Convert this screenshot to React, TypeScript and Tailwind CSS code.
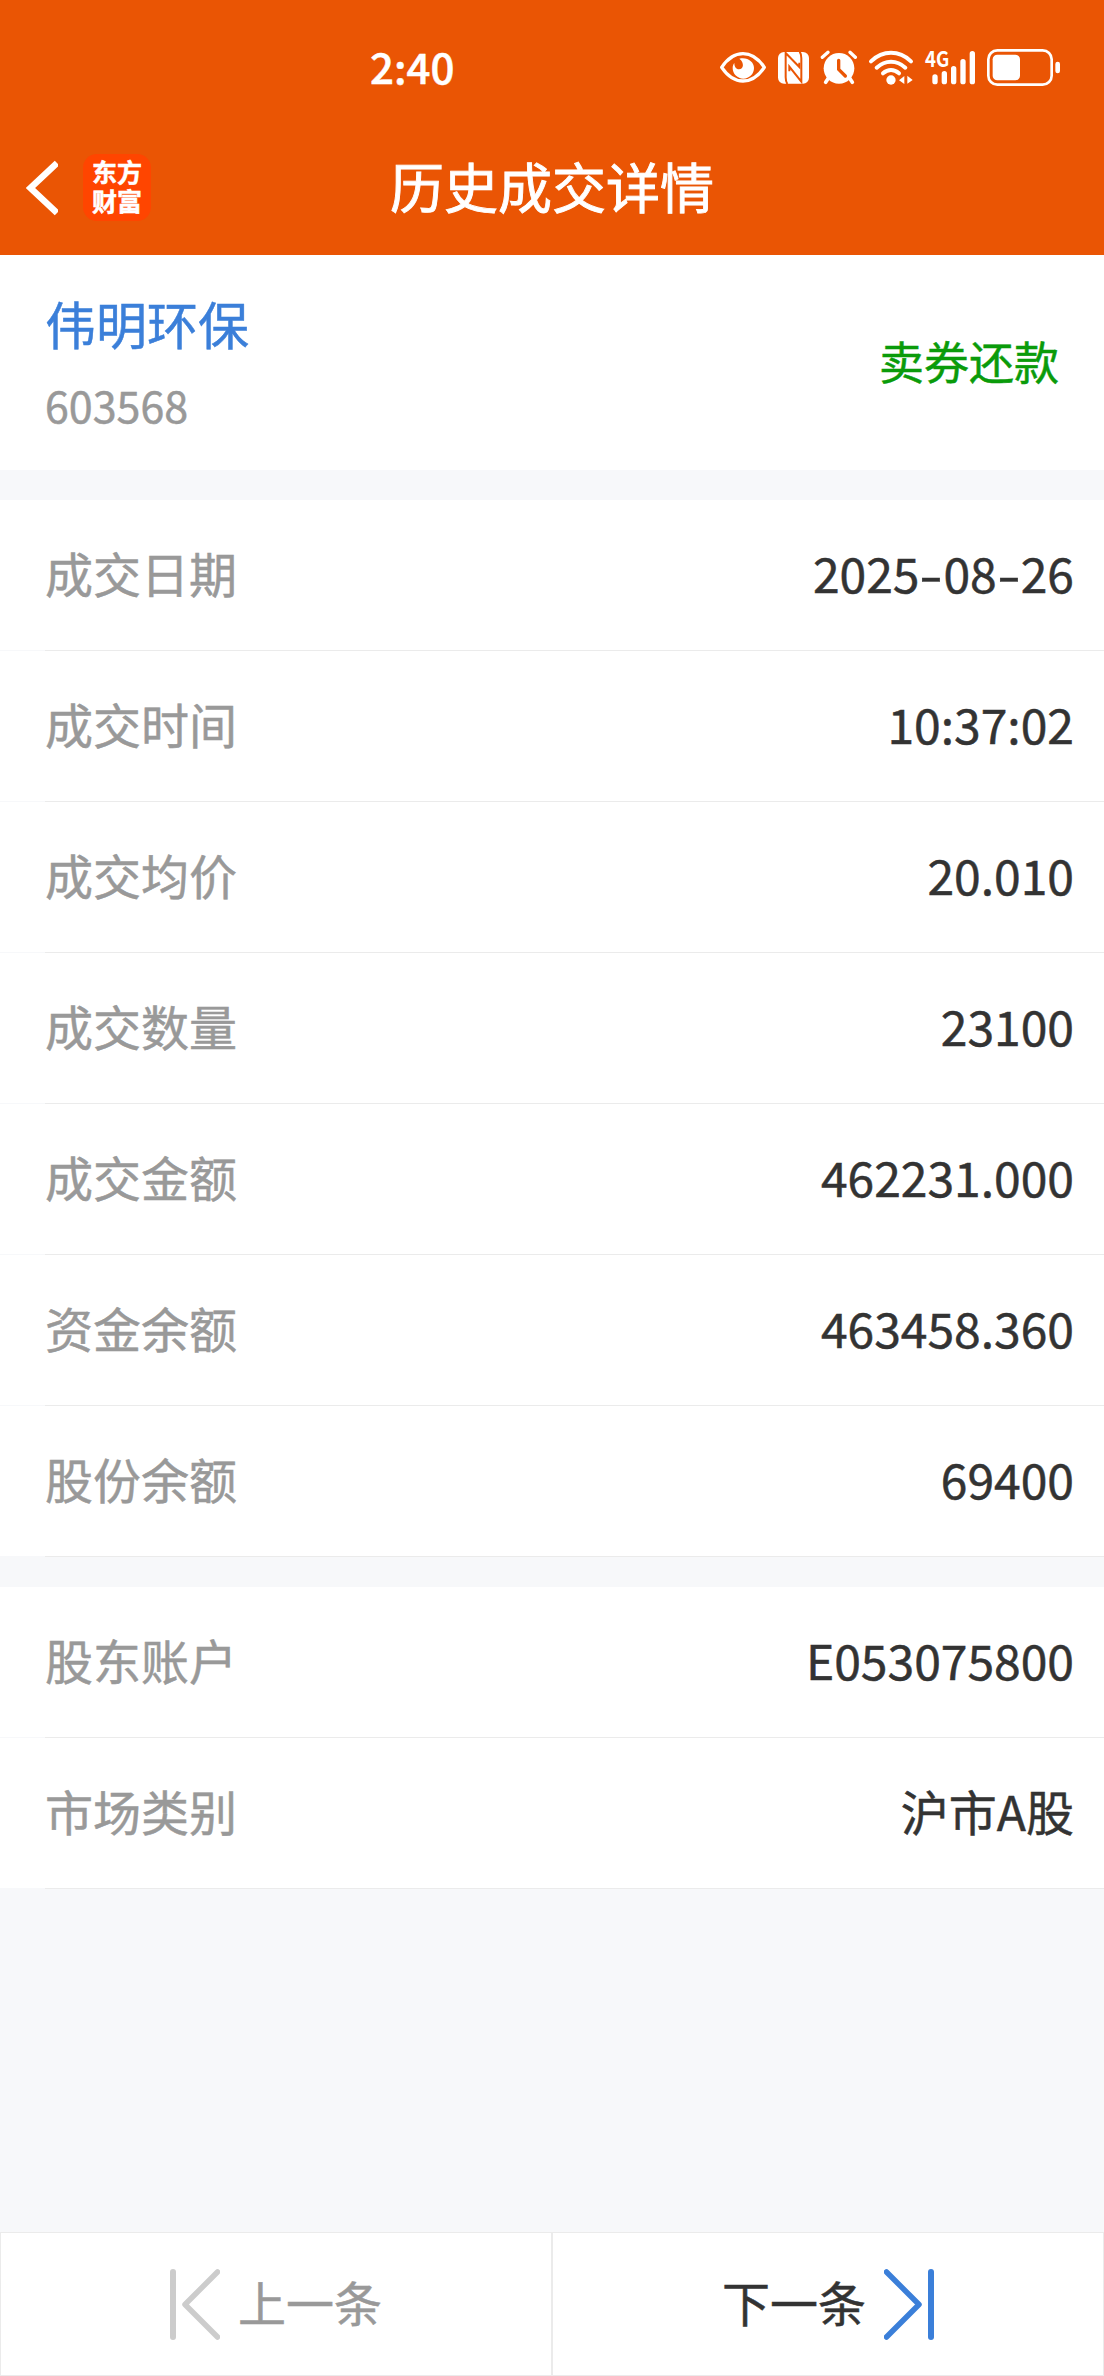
import React from 'react';

interface DetailItem {
  label: string;
  value: string;
}

const tradeItems: DetailItem[] = [
  { label: '成交日期', value: '2025-08-26' },
  { label: '成交时间', value: '10:37:02' },
  { label: '成交均价', value: '20.010' },
  { label: '成交数量', value: '23100' },
  { label: '成交金额', value: '462231.000' },
  { label: '资金余额', value: '463458.360' },
  { label: '股份余额', value: '69400' },
];

const accountItems: DetailItem[] = [
  { label: '股东账户', value: 'E053075800' },
  { label: '市场类别', value: '沪市A股' },
];

const StatusIcons: React.FC = () => (
  <div className="flex items-center gap-2.5 text-white">
    {/* Eye comfort */}
    <svg className="mr-0.5 h-[39px] w-[46px]" viewBox="60 54 138 117" fill="none">
      <path d="M65 112C84 84 105 71 129 71s45 13 64 41c-19 28-40 41-64 41s-45-13-64-41Z" stroke="currentColor" strokeWidth="10" strokeLinejoin="round" />
      <path d="M118 86c24-6 44 9 44 28a32 32 0 0 1-64 0c0-6 2-11 5-15 0 11 5 19 14 19 14 0 17-20 1-32Z" fill="currentColor" />
    </svg>
    {/* NFC */}
    <svg className="h-[39px] w-[32px]" viewBox="234 54 96 117" fill="none">
      <rect x="234" y="66" width="93" height="95" rx="18" fill="currentColor" />
      <path d="M262 162c-4-6-5-12-5-20V69l41 42V98" stroke="#ea5504" strokeWidth="6" />
      <path d="M299 65c4 6 5 12 5 20v70l-36-45v14" stroke="#ea5504" strokeWidth="6" />
    </svg>
    {/* Alarm */}
    <svg className="h-[39px] w-[38px]" viewBox="360 54 114 117" fill="none" stroke="currentColor" strokeLinecap="round">
      <circle cx="417" cy="115" r="46" fill="currentColor" stroke="none" />
      <path d="M367 82l17-15M466 82l-16-15" strokeWidth="10" />
      <path d="M385 145l-8 12M449 145l8 12" strokeWidth="11" />
      <path d="M416 91v27l20 20" stroke="#ea5504" strokeWidth="10" />
    </svg>
    {/* Wifi */}
    <svg className="h-[39px] w-[46px]" viewBox="504 54 138 117" fill="none" stroke="currentColor" strokeLinecap="round">
      <path d="M513 94c36-34 84-34 120 0" strokeWidth="12" />
      <path d="M530 113c26-24 60-24 86 0" strokeWidth="12" />
      <path d="M549 130c15-13 33-13 48 0" strokeWidth="12" />
      <circle cx="573" cy="150" r="14" fill="currentColor" stroke="none" />
      <path d="M597 151l16-13v24ZM638 150l-16-13v24Z" fill="currentColor" stroke="none" />
    </svg>
    {/* Mobile signal */}
    <svg className="h-[39px] w-[52px] overflow-visible" viewBox="672 54 156 117" fill="none" stroke="currentColor" strokeLinecap="round" strokeWidth="16">
      <text x="675" y="111" fontSize="64" fontWeight="700" fill="currentColor" stroke="none" textLength="73" lengthAdjust="spacingAndGlyphs">4G</text>
      <path d="M705 141v14M733 131v24M761 116v39M789 95v60M817 71v84" />
    </svg>
    {/* Battery */}
    <svg className="h-[39px] w-[75px]" viewBox="858 54 225 117" fill="none">
      <rect x="865" y="61" width="190" height="103" rx="27" stroke="currentColor" strokeWidth="8" />
      <rect x="878" y="74" width="82" height="77" rx="14" fill="currentColor" />
      <rect x="1066" y="95" width="14" height="35" rx="7" fill="currentColor" />
    </svg>
  </div>
);

const DetailRow: React.FC<{ item: DetailItem }> = ({ item }) => (
  <div className="h-[151px]">
    <div className="flex h-[150px] items-center justify-between bg-white pl-[45px] pr-[30px] text-[48px] leading-none">
      <span className="pb-[6px] text-[#999999]">{item.label}</span>
      <span className="pb-[6px] text-[#333333]">
        {item.value.split('-').map((part, i) => (
          <React.Fragment key={i}>
            {i > 0 && <span className="inline-block w-[24px] scale-x-140 text-center">-</span>}
            {part}
          </React.Fragment>
        ))}
      </span>
    </div>
    <div className="ml-[45px] h-px bg-[#ebebeb]" />
  </div>
);

const App: React.FC = () => {
  return (
    <div className="flex h-[2376px] w-[1104px] flex-col overflow-hidden bg-[#f7f8fa] font-['Noto_Sans_CJK_SC',sans-serif] [-webkit-text-stroke:0.5px]">
      <header className="h-[255px] bg-[#ea5504] text-white">
        <div className="flex h-[120px] items-start justify-between pl-[370px] pr-[43px] pt-[48px]">
          <span className="-mt-0.5 text-[42px] font-medium leading-[39px]">2:40</span>
          <StatusIcons />
        </div>
        <div className="grid h-[135px] grid-cols-[1fr_auto_1fr] items-center">
          <div className="flex items-center gap-[25px] pl-[26px]">
            <svg className="h-[56px] w-[32px]" viewBox="0 0 32 56" fill="none">
              <path d="M31 3L4.500 28l26.500 25" stroke="currentColor" strokeWidth="6.500" />
            </svg>
            <div className="w-[68px] rounded-[14px] bg-[#ff4500] pb-[6px] pt-[3px] text-center text-[25px] font-bold leading-[29px]">
              东方
              <br />
              财富
            </div>
          </div>
          <h1 className="pb-[4px] text-[54px] leading-none [-webkit-text-stroke:0.9px]">历史成交详情</h1>
        </div>
      </header>

      {/* Stock summary */}
      <section className="flex h-[215px] items-center justify-between bg-white pl-[45px] pr-[45px]">
        <div className="flex flex-col gap-[34px] pb-[2px]">
          <span className="text-[51px] leading-none text-[#3b7fd9]">伟明环保</span>
          <span className="text-[43px] leading-none text-[#999999]">603568</span>
        </div>
        <span className="pb-[5px] text-[45px] leading-none text-[#0a9b0a]">卖券还款</span>
      </section>

      <section className="mt-[30px]">
        {tradeItems.map((item) => (
          <DetailRow key={item.label} item={item} />
        ))}
      </section>

      <section className="mt-[30px]">
        {accountItems.map((item) => (
          <DetailRow key={item.label} item={item} />
        ))}
      </section>

      {/* Previous / next record */}
      <footer className="mt-auto grid h-[144px] grid-cols-2 text-[48px] leading-none">
        <button className="flex items-center justify-center gap-[18px] border border-[#ebebeb] bg-white text-[#999999]">
          <svg className="h-[71px] w-[50px]" viewBox="0 0 50 71" fill="none" stroke="#cccccc" strokeWidth="6" strokeLinecap="round" strokeLinejoin="round">
            <path d="M3 3v65" />
            <path d="M47.500 3L15 35.500l32.500 32.500" strokeWidth="5.500" />
          </svg>
          <span className="pb-[6px]">上一条</span>
        </button>
        <button className="flex items-center justify-center gap-[18px] border border-[#ebebeb] bg-white text-[#333333]">
          <span className="pb-[6px]">下一条</span>
          <svg className="h-[71px] w-[50px]" viewBox="0 0 50 71" fill="none" stroke="#3b7fd9" strokeWidth="6" strokeLinecap="round" strokeLinejoin="round">
            <path d="M47 3v65" />
            <path d="M2.500 3L35 35.500L2.500 68" strokeWidth="5.500" />
          </svg>
        </button>
      </footer>
    </div>
  );
};

export default App;
